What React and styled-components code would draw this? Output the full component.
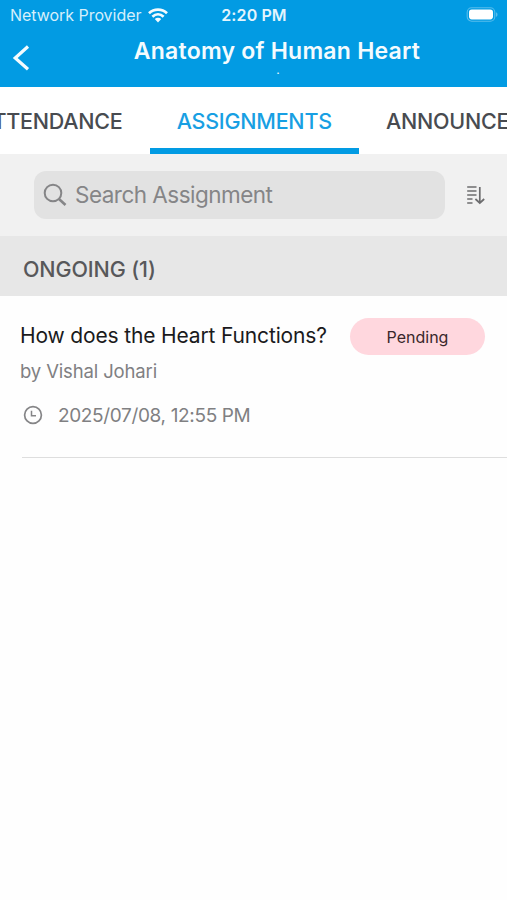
import React from "react";
import styled, { createGlobalStyle } from "styled-components";

const GlobalStyle = createGlobalStyle`
  * { box-sizing: border-box; }
  body { margin: 0; background: #fff; }
`;

const Screen = styled.main`
  width: 507px;
  height: 900px;
  overflow: hidden;
  background: #fefefe;
  font-family: Inter, "Liberation Sans", sans-serif;
`;

const Header = styled.header`
  height: 87px;
  background: #029be3;
  color: #f4fbfe;
`;

const StatusBar = styled.div`
  display: grid;
  grid-template-columns: 1fr auto 1fr;
  align-items: center;
  height: 30px;
  padding: 0 9px 0 10px;
`;

const Carrier = styled.div`
  display: flex;
  align-items: center;
  gap: 7px;
  font-size: 16px;
  line-height: 20px;
  letter-spacing: -0.04px;
  color: #d5effb;
`;

const Clock = styled.time`
  font-size: 16px;
  font-weight: 600;
  line-height: 20px;
  letter-spacing: 0.1px;
  color: #e4f5fd;
`;

const Battery = styled.svg`
  justify-self: end;
`;

const NavBar = styled.div`
  display: grid;
  grid-template-columns: 46px 1fr;
  height: 57px;
`;

const BackButton = styled.button`
  display: flex;
  align-items: center;
  padding: 0 0 2px 11px;
  border: 0;
  background: none;
  color: inherit;
`;

const Heading = styled.div`
  display: flex;
  flex-direction: column;
  align-items: center;
  padding: 7px 0 0 1px;
`;

const Title = styled.h1`
  margin: 0;
  font-size: 23px;
  font-weight: 600;
  line-height: 28px;
  letter-spacing: 0.24px;
  white-space: nowrap;
`;

const Subtitle = styled.div`
  padding-left: 2px;
  font-size: 12px;
  line-height: 10px;
`;

const Tabs = styled.nav`
  display: flex;
  height: 67px;
  background: #fff;
  overflow: hidden;
`;

const Tab = styled.div`
  flex: 0 0 ${(p) => p.$width}px;
  min-width: 0;
  display: flex;
  justify-content: ${(p) => p.$align || "center"};
  padding: 19px 27px 0;
  border-bottom: 6px solid ${(p) => (p.$active ? "#029be3" : "transparent")};
  color: ${(p) => (p.$active ? "#189fe3" : "#484b50")};
  font-size: 21.5px;
  font-weight: 500;
  line-height: 30px;
  letter-spacing: -0.25px;
  white-space: nowrap;
`;

const SearchBar = styled.div`
  display: flex;
  align-items: center;
  height: 82px;
  padding: 0 21px 0 34px;
  background: #f1f1f1;
`;

const SearchField = styled.div`
  display: flex;
  align-items: center;
  gap: 8px;
  width: 411px;
  height: 48px;
  margin-right: 21px;
  padding-left: 9px;
  border-radius: 12px;
  background: #e2e2e2;
  color: #858587;
  font-size: 22.5px;
  line-height: 30px;
  letter-spacing: -0.52px;
`;

const SectionHeader = styled.h2`
  height: 60px;
  margin: 0;
  padding: 18px 23px 0;
  background: #e7e7e7;
  color: #58585a;
  font-size: 21.5px;
  font-weight: 500;
  line-height: 30px;
  letter-spacing: -0.12px;
`;

const Assignment = styled.article`
  height: 162px;
  margin-left: 22px;
  border-bottom: 1px solid #dedede;
`;

const TitleRow = styled.div`
  display: flex;
  justify-content: space-between;
  margin-left: -2px;
  padding: 22px 22px 0 0;
`;

const AssignmentTitle = styled.h3`
  margin: 3px 0 0;
  color: #1a1a1c;
  font-size: 21px;
  font-weight: 400;
  line-height: 30px;
  letter-spacing: -0.15px;
  white-space: nowrap;
`;

const Badge = styled.span`
  display: flex;
  align-items: center;
  justify-content: center;
  width: 135px;
  height: 37px;
  border-radius: 19px;
  background: #ffd7de;
  color: #39272b;
  font-size: 16px;
`;

const Author = styled.div`
  margin: 4px 0 0 -2px;
  color: #808082;
  font-size: 18.5px;
  line-height: 24px;
  letter-spacing: -0.14px;
`;

const DueDate = styled.div`
  display: flex;
  align-items: flex-start;
  gap: 15px;
  margin-top: 20px;
  padding-left: 1px;
  color: #808082;
  font-size: 19px;
  line-height: 24px;
  letter-spacing: -0.35px;
`;

const ClockIcon = styled.svg`
  margin-top: 2px;
`;

const DueText = styled.span`
  padding-top: 1px;
`;

export default function App() {
  return (
    <Screen>
      <GlobalStyle />
      <Header>
        <StatusBar>
          <Carrier>
            <span>Network Provider</span>
            <svg width="20" height="15" viewBox="0 0 20 15" fill="none" stroke="#f4fbfe" strokeWidth="2.7">
              <path d="M1 5.2C6 .4 14 .4 19 5.2M4.4 8.7C7.7 5.6 12.3 5.6 15.6 8.7" />
              <path d="M6.8 11.1C8.7 9.4 11.3 9.4 13.2 11.1L10 14.4Z" fill="#f4fbfe" stroke="none" />
            </svg>
          </Carrier>
          <Clock>2:20 PM</Clock>
          <Battery width="32" height="16" viewBox="0 0 32 16">
            <rect x="1.2" y=".8" width="27.6" height="13.4" rx="4.5" fill="none" stroke="#58bdec" strokeWidth="1.1" />
            <rect x="3" y="2.6" width="24" height="9.8" rx="2.8" fill="#fff" />
            <path d="M30 5.2C32 6 32 9 30 9.8Z" fill="#58bdec" />
          </Battery>
        </StatusBar>
        <NavBar>
          <BackButton aria-label="Back">
            <svg width="20" height="28" viewBox="0 0 20 28" fill="none" stroke="#f4fbfe" strokeWidth="3.2">
              <path d="M17 2.5 4.2 14 17 25.2" />
            </svg>
          </BackButton>
          <Heading>
            <Title>Anatomy of Human Heart</Title>
            <Subtitle>.</Subtitle>
          </Heading>
        </NavBar>
      </Header>
      <Tabs>
        <Tab $width={149.5} $align="flex-end">ATTENDANCE</Tab>
        <Tab $width={209.5} $active>ASSIGNMENTS</Tab>
        <Tab $width={260} $align="flex-start">ANNOUNCEMENTS</Tab>
      </Tabs>
      <SearchBar>
        <SearchField>
          <svg width="24" height="24" viewBox="0 0 24 24" fill="none" stroke="#858587" strokeWidth="2">
            <circle cx="10" cy="10" r="8.3" />
            <path d="m16 16 6.5 6" strokeWidth="2.6" />
          </svg>
          Search Assignment
        </SearchField>
        <svg width="20" height="20" viewBox="0 0 20 20" fill="none" stroke="#6d6d6f" strokeWidth="1.7">
          <path d="M1.2 2H10.5M1.2 6H10.5M1.2 10H10.5M1.2 14H6.5M1.2 18H6.5M13.8 2V18M9.4 14 13.8 18 18.2 14" />
        </svg>
      </SearchBar>
      <SectionHeader>ONGOING (1)</SectionHeader>
      <Assignment>
        <TitleRow>
          <AssignmentTitle>How does the Heart Functions?</AssignmentTitle>
          <Badge>Pending</Badge>
        </TitleRow>
        <Author>by Vishal Johari</Author>
        <DueDate>
          <ClockIcon width="20" height="20" viewBox="0 0 20 20" fill="none" stroke="#858587" strokeWidth="1.7">
            <circle cx="10" cy="10" r="8.4" />
            <path d="M8.5 5.8V10.8H13" strokeWidth="1.5" />
          </ClockIcon>
          <DueText>2025/07/08, 12:55 PM</DueText>
        </DueDate>
      </Assignment>
    </Screen>
  );
}
